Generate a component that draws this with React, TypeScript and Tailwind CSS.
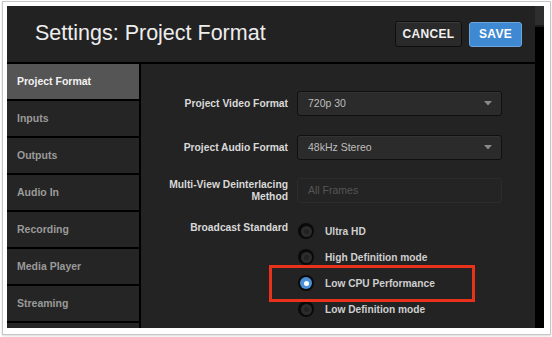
import React from "react";

const font = { fontFamily: '"Liberation Sans", Arial, sans-serif' };

function Select({ value }: { value: string }) {
  return (
    <div className="h-[25px] w-[205px] rounded-[3px] border border-[#101010] bg-[#2b2b2b] flex items-center justify-between pl-[10px] pr-[9px] shadow-[inset_0_1px_0_#333]">
      <span className="text-[10.5px] text-[#bdbdbd]">{value}</span>
      <svg width="8" height="5" viewBox="0 0 8 5"><path d="M0 0 L8 0 L4 4.5 Z" fill="#8a8a8a" /></svg>
    </div>
  );
}

function Radio({ label, checked }: { label: string; checked?: boolean }) {
  return (
    <div className="h-[26px] flex items-start">
      <div className="ml-[1px] h-[16px] w-[16px] flex items-center justify-center rounded-full bg-[#0a0a0a]">
        {checked ? (
          <div className="h-[12px] w-[12px] rounded-full bg-[#4a8fd8] flex items-center justify-center">
            <div className="h-[5px] w-[5px] rounded-full bg-white" />
          </div>
        ) : (
          <div className="h-[11px] w-[11px] rounded-full bg-[#2c2c2c] flex items-center justify-center">
            <div className="h-[5px] w-[5px] rounded-full bg-[#222]" />
          </div>
        )}
      </div>
      <span className="ml-[11px] mt-[3px] text-[10.2px] font-bold text-[#cfcfcf] leading-[12px]">{label}</span>
    </div>
  );
}

export default function App() {
  const items = ["Project Format", "Inputs", "Outputs", "Audio In", "Recording", "Media Player", "Streaming", ""];
  return (
    <div className="relative w-[552px] h-[337px] bg-white pt-[1px] pl-[2px] overflow-hidden" style={font}>
      <div className="w-[549px] h-[334px] border border-[#c6c6c6] bg-white pt-[4px] pl-[4px] shadow-[0_1px_2px_rgba(0,0,0,0.15)]">
        <div className="w-[537px] h-[322px] flex overflow-hidden">
          <div className="w-[528px] h-full flex flex-col">
            <div className="h-[58px] bg-[#222222] border-b-2 border-black flex items-center justify-between pl-[28px] pr-[13px]">
              <span className="text-[21.5px] text-[#ededed] leading-none">Settings: Project Format</span>
              <div className="flex items-center gap-[7px]">
                <div className="h-[26px] w-[67px] rounded-[3px] border border-[#0e0e0e] bg-[#2a2a2a] flex items-center justify-center text-[12px] font-bold text-[#f0f0f0] tracking-[0.3px] shadow-[inset_0_1px_0_#3a3a3a]">CANCEL</div>
                <div className="h-[25px] w-[53px] rounded-[3px] border border-[#6aa6e0] bg-[#3f88d2] flex items-center justify-center text-[12px] font-bold text-white tracking-[0.3px]">SAVE</div>
              </div>
            </div>
            <div className="flex flex-1 min-h-0">
              <div className="w-[134px] border-r-2 border-black bg-black flex flex-col overflow-hidden">
                {items.map((it, i) => (
                  <div
                    key={i}
                    className={
                      i === 0
                        ? "shrink-0 h-[35px] mb-[2px] bg-[#555555] flex items-center pl-[10px] text-[10.5px] font-bold text-[#f2f2f2]"
                        : "shrink-0 h-[35px] mb-[2px] bg-[#252525] flex items-center pl-[10px] text-[10.5px] font-bold text-[#9a9a9a]"
                    }
                  >
                    {it}
                  </div>
                ))}
              </div>
              <div className="flex-1 bg-[#232323] pt-[27px]">
                <div className="grid grid-cols-[147px_205px] gap-x-[9px] items-center">
                  <div className="text-right text-[10.3px] font-bold text-[#d9d9d9]">Project Video Format</div>
                  <Select value="720p 30" />
                  <div className="h-[19px] col-span-2" />
                  <div className="text-right text-[10.3px] font-bold text-[#d9d9d9]">Project Audio Format</div>
                  <Select value="48kHz Stereo" />
                  <div className="h-[18px] col-span-2" />
                  <div className="text-right text-[10.3px] font-bold text-[#d9d9d9] leading-[12px]">Multi-View Deinterlacing<br />Method</div>
                  <div className="h-[25px] w-[205px] rounded-[3px] border border-[#2c2c2c] bg-[#242424] flex items-center pl-[10px] text-[10.5px] text-[#555]">All Frames</div>
                  <div className="h-[20px] col-span-2" />
                  <div className="self-start text-right text-[10.3px] font-bold text-[#d9d9d9] -mt-[1px] leading-[12px]">Broadcast Standard</div>
                  <div className="flex flex-col">
                    <Radio label="Ultra HD" />
                    <Radio label="High Definition mode" />
                    <Radio label="Low CPU Performance" checked />
                    <Radio label="Low Definition mode" />
                  </div>
                </div>
              </div>
            </div>
          </div>
          <div className="w-[9px] h-full bg-black flex flex-col">
            <div className="h-[21px] bg-[#2e2e2e] border-b-2 border-[#1a1a1a]" />
          </div>
        </div>
      </div>
      <div className="absolute left-[269px] top-[265px] w-[206px] h-[37px] border-[3px] border-[#e8321c]" />
    </div>
  );
}
